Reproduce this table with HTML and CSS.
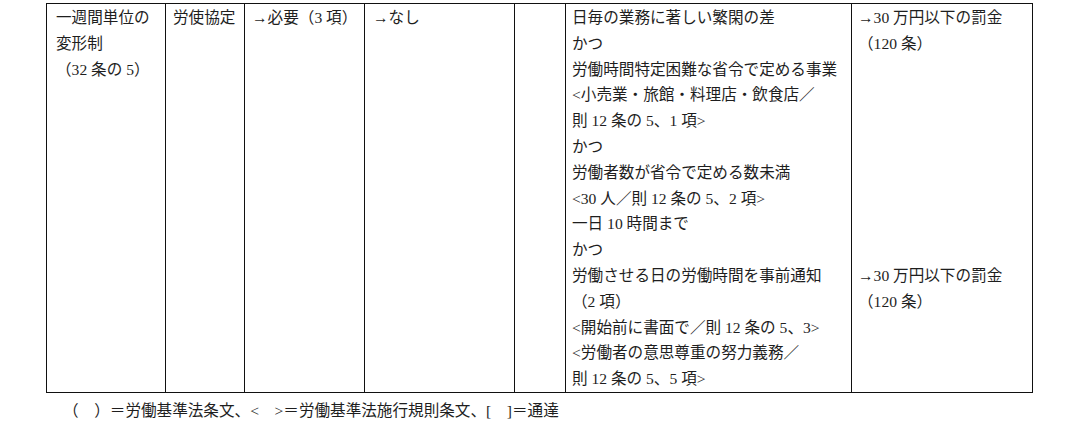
FILE: index.html
```html
<!DOCTYPE html>
<html lang="ja">
<head>
<meta charset="utf-8">
<link rel="stylesheet" href="styles.css">
</head>
<body>
<div class="page">
  <table class="grid">
    <colgroup>
      <col class="c1"><col class="c2"><col class="c3"><col class="c4"><col class="c5"><col class="c6"><col class="c7">
    </colgroup>
    <tr>
      <td class="p1">
        <div class="ln">一週間単位の</div>
        <div class="ln">変形制</div>
        <div class="ln">（32 条の 5）</div>
      </td>
      <td class="p2"><div class="ln">労使協定</div></td>
      <td class="p3"><div class="ln">→必要（3 項）</div></td>
      <td class="p4"><div class="ln">→なし</div></td>
      <td></td>
      <td class="p6">
        <div class="ln">日毎の業務に著しい繁閑の差</div>
        <div class="ln">かつ</div>
        <div class="ln">労働時間特定困難な省令で定める事業</div>
        <div class="ln">&lt;小売業・旅館・料理店・飲食店／</div>
        <div class="ln">則 12 条の 5、1 項&gt;</div>
        <div class="ln">かつ</div>
        <div class="ln">労働者数が省令で定める数未満</div>
        <div class="ln">&lt;30 人／則 12 条の 5、2 項&gt;</div>
        <div class="ln">一日 10 時間まで</div>
        <div class="ln">かつ</div>
        <div class="ln">労働させる日の労働時間を事前通知</div>
        <div class="ln">（2 項）</div>
        <div class="ln">&lt;開始前に書面で／則 12 条の 5、3&gt;</div>
        <div class="ln">&lt;労働者の意思尊重の努力義務／</div>
        <div class="ln">則 12 条の 5、5 項&gt;</div>
      </td>
      <td class="p7">
        <div class="ln">→30 万円以下の罰金</div>
        <div class="ln">（120 条）</div>
        <div class="gap"></div>
        <div class="ln">→30 万円以下の罰金</div>
        <div class="ln">（120 条）</div>
      </td>
    </tr>
  </table>
  <p class="note">（　）＝労働基準法条文、&lt;　&gt;＝労働基準法施行規則条文、[　]＝通達</p>
</div>
</body>
</html>
```
FILE: styles.css
```css
html, body {
  margin: 0;
  padding: 0;
  background: #ffffff;
}
body {
  font-family: "Liberation Serif", "Noto Sans CJK JP", serif;
  font-size: 15.6px;
  color: #1e1e1e;
}
.page {
  padding: 3px 0 0 46px;
}
.grid {
  border-collapse: collapse;
  table-layout: fixed;
  width: 986px;
}
.c1 { width: 119px; }
.c2 { width: 79px; }
.c3 { width: 120px; }
.c4 { width: 150px; }
.c5 { width: 51px; }
.c6 { width: 286px; }
.c7 { width: 181px; }
.grid td {
  border: 1.5px solid #111;
  vertical-align: top;
  height: 385px;
  padding: 1px 0 0 6px;
  white-space: nowrap;
  overflow: hidden;
}
.grid td.p1 { padding-left: 9px; }
.grid td.p2 { padding-left: 7px; }
.grid td.p3 { padding-left: 7px; }
.grid td.p4 { padding-left: 8px; }
.grid td.p7 { padding-left: 6px; }
.ln {
  height: 25.8px;
  line-height: 25.8px;
}
.gap {
  height: 206.4px;
}
.note {
  margin: 0;
  padding-left: 17px;
  line-height: 35px;
}
```
